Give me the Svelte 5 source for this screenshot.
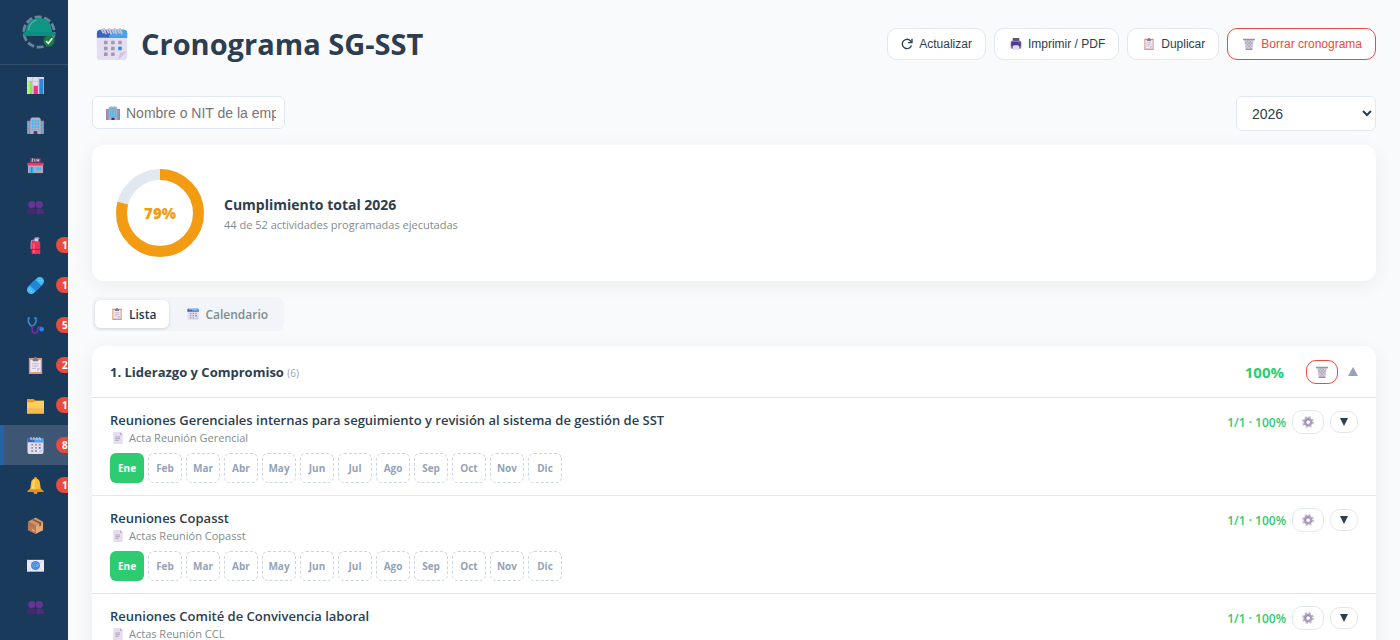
<script lang="ts">
  interface NavItem {
    icon: string;
    label: string;
    badge?: string;
  }

  interface Activity {
    name: string;
    record: string;
    done: string[];
  }

  const nav: NavItem[] = [
    { icon: 'chart', label: 'Dashboard' },
    { icon: 'building', label: 'Empresas' },
    { icon: 'store', label: 'Sedes' },
    { icon: 'people', label: 'Trabajadores' },
    { icon: 'extinguisher', label: 'Extintores', badge: '1' },
    { icon: 'bandage', label: 'Botiquines', badge: '1' },
    { icon: 'stethoscope', label: 'Exámenes', badge: '5' },
    { icon: 'clipboard', label: 'Inspecciones', badge: '2' },
    { icon: 'folder', label: 'Documentos', badge: '1' },
    { icon: 'calendar', label: 'Cronograma', badge: '8' },
    { icon: 'bell', label: 'Alertas', badge: '10' },
    { icon: 'box', label: 'Inventario' },
    { icon: 'mail', label: 'Correos' },
    { icon: 'people', label: 'Usuarios' },
  ];

  const months = ['Ene', 'Feb', 'Mar', 'Abr', 'May', 'Jun', 'Jul', 'Ago', 'Sep', 'Oct', 'Nov', 'Dic'];

  const activities: Activity[] = [
    {
      name: 'Reuniones Gerenciales internas para seguimiento y revisión al sistema de gestión de SST',
      record: 'Acta Reunión Gerencial',
      done: ['Ene'],
    },
    { name: 'Reuniones Copasst', record: 'Actas Reunión Copasst', done: ['Ene'] },
    { name: 'Reuniones Comité de Convivencia laboral', record: 'Actas Reunión CCL', done: ['Ene'] },
  ];

  let current = $state('Cronograma');
  let view = $state('lista');
  let year = $state('2026');
  let company = $state('');
  let open = $state(true);

  const percent = 79;
  const ring = 2 * Math.PI * 38.5;
</script>

{#snippet icon(name: string)}
  <svg class="icon" viewBox="0 0 18 18" fill="none" aria-hidden="true">
    {#if name === 'chart'}
      <path fill="#e4dcee" d="M0 0h18v18H0z" />
      <path stroke="#bdb3ca" stroke-width=".6" d="M0 4.500h18M0 9h18M0 13.500h18M6 0v18M12 0v18" />
      <path fill="#8ee05a" d="M1 4.500h4.500V18H1z" />
      <path fill="#b6f074" d="M1 4.500h2V18H1z" />
      <path fill="#f0357d" d="M7 9.500h4.500V18H7z" />
      <path fill="#2f86dc" d="M13 2h4.500v16H13z" />
    {:else if name === 'building'}
      <path fill="#988ba6" d="M0 4h5v14H0zM13 4h5v14h-5z" />
      <path fill="#b7adc2" d="M3.500 2 5 .5h8L14.500 2v16h-11z" />
      <path stroke="#38bdf8" stroke-width="2" stroke-dasharray="2.500 .7" d="M6 3v11M9 3v11M12 3v11" />
      <path stroke="#5db8e8" stroke-width="1.200" stroke-dasharray="2 1.500" d="M1.800 6v11M16.200 6v11" />
      <path fill="#53345f" d="M7 15h4v3H7z" />
    {:else if name === 'store'}
      <path fill="#54425f" d="M3 1h12v5H3z" />
      <path stroke="#eee7f5" stroke-width=".8" d="M5 2h1.500L5 4.500h1.500M8.200 2v3M10.500 5V2M10.500 3.500h2M12.500 2v3" />
      <path fill="#b5a7c0" d="M1 8h16v9H1z" />
      <path fill="#f0326f" d="M.5 6h17l.5 3H0z" />
      <path fill="#39bfec" d="M2.500 10.500h5V17h-5zM9.500 11h6v3h-6z" />
      <path stroke="#176d9b" stroke-width=".7" d="M5 10.500V17" />
    {:else if name === 'people'}
      <circle cx="5" cy="8" r="3.800" fill="#643394" />
      <path fill="#4a286f" d="M0 18v-2.500C0 13.500 2 12 5 12s4.500 1.500 4.500 3.500V18z" />
      <circle cx="13" cy="8" r="3.800" fill="#643394" />
      <path fill="#512b7a" d="M8.500 18v-2.500c0-2 1.800-3.500 4.700-3.500s4.800 1.500 4.800 3.500V18z" />
      <path stroke="#321c53" stroke-width=".6" d="M9.200 12v6" />
    {:else if name === 'extinguisher'}
      <path stroke="#9c91a9" stroke-width="1.500" d="M8 3 5 4 4.500 7v6M8 1h4M11 0l2 2" />
      <path fill="#ef315f" d="M5 7c0-2.500 2-3.500 4.500-3.500S14 4.500 14 7v11H5z" />
      <path fill="#fa6d8b" d="M6.500 7H8v10H6.500z" />
      <path fill="#c21744" d="M5 12.500h9v1.200H5z" />
      <path fill="#d9d1e4" d="M8 1.500h4v3H8z" />
    {:else if name === 'bandage'}
      <rect x="-2" y="4.500" width="22" height="9" rx="4.500" fill="#42b9f5" transform="rotate(-45 9 9)" />
      <path fill="#2384d8" d="m8.800 2.800 6.400 6.400-6 6L2.800 8.800z" />
      <g fill="#a3e4ff">
        <circle cx="13.500" cy="3.500" r=".6" /><circle cx="15.500" cy="4" r=".6" />
        <circle cx="2.800" cy="13" r=".6" /><circle cx="4.500" cy="15" r=".6" />
      </g>
    {:else if name === 'stethoscope'}
      <path stroke="#348bdc" stroke-width="1.700" d="M3 1H1.500v4l1.500 3 2 2 3-2 1.500-3V1H7.500" />
      <path stroke="#6a329e" stroke-width="1.700" d="M5.500 9.500V14c0 2 1 3 3 3s3-1 3-3v-1c0-1.500 1-2.500 2-2.500s2.500 1 2.500 2.500" />
      <circle cx="15.500" cy="13" r="2.400" fill="#2687ee" />
    {:else if name === 'clipboard'}
      <path fill="#d79973" d="M2 1h14v17H2z" />
      <path fill="#f0e8f7" d="M3.500 3h11v13h-11z" />
      <path fill="#83798f" d="M6 2h1.500L8 0h2l.5 2H12v2.500H6z" />
      <path stroke="#b9aec4" d="M5.500 7h7M5.500 9.500h7M5.500 12h4" />
      <path fill="#cbbad7" d="m10.500 16 4-4h-4z" />
    {:else if name === 'folder'}
      <path fill="#e8992c" d="M0 2h7l2 2h9v5H0z" />
      <path fill="#ffce5c" d="M0 5.500h7L9 4h9v13.500H0z" />
      <path fill="#f9b951" d="M0 12h18v5.500H0z" />
    {:else if name === 'calendar'}
      <rect x=".5" y="1" width="17" height="17" rx="2" fill="#e5ddf0" />
      <path fill="#3464c0" d="M.5 3c0-1.300.7-2 2-2h13c1.300 0 2 .7 2 2v2.500H.5z" />
      <path fill="#49a4ea" d="M9 1h6.500c1.300 0 2 .7 2 2v2.500H7z" />
      <path stroke="#c9c3d6" stroke-width="1" d="m4.300 3-1-1.800 1.300-.7 1 3m1.700-.5-1-1.800 1.300-.7 1 3m1.700-.5-1-1.800 1.300-.7 1 3m1.700-.5-1-1.800 1.300-.7 1 3" />
      <path fill="#a299af" d="M4.500 7.200h2v2h-2zm4 0h2v2h-2zm4 0h2v2h-2zm-8 3.300h2v2h-2zm4 0h2v2h-2zm-4 3.300h2v2h-2zm4 0h2v2h-2z" />
      <path fill="#288aeb" d="M12.500 10.500h2v2h-2z" />
      <path fill="#cfc2da" d="m12.500 18 5-5-4 1z" />
    {:else if name === 'bell'}
      <path fill="#e98d31" d="M8 0h2l1 3H7zM6.500 15h5l-1 3h-3z" />
      <path fill="#f9b939" d="M1 15.500 3.500 12l1-7C5 3 6.500 1.500 9 1.500s4 1.500 4.500 3.500l1 7 2.500 3.500z" />
      <path fill="#ffd765" d="M5 13 6 5.500C6.300 4 7 3 8.500 3L8 13z" />
      <path fill="#e88b25" d="M.5 16v-1.500L3 13h12l2.500 1.500V16z" />
    {:else if name === 'box'}
      <path fill="#cf986c" d="m1 5 8-4.500L17 5 9 9z" />
      <path fill="#b87852" d="m1 5 8 4v9l-8-4z" />
      <path fill="#dfa978" d="m17 5-8 4v9l8-4z" />
      <path fill="#885035" d="m5 3 8 4v3l2-1V6L7 2z" />
      <path stroke="#f5d6c0" d="m5 13 3 2" />
    {:else if name === 'mail'}
      <path fill="#eee7f5" d="M0 3h18v12.500H0z" />
      <path stroke="#d5cbe0" stroke-width=".8" d="m.5 3.500 8.500 7 8.500-7M.5 15 7 9m4 0 6.500 6" />
      <circle cx="9" cy="9" r="4.700" fill="#3485dc" />
      <circle cx="9" cy="9" r="1.500" stroke="#a3ccf5" stroke-width=".6" />
      <path stroke="#a3ccf5" stroke-width=".5" d="M10.700 7.500V10c1 1 1.500 0 1.500-1A3.200 3.200 0 1 0 10 12" />
    {:else if name === 'refresh'}
      <path stroke="#2c3e50" stroke-width="2" d="M15.700 11A7 7 0 1 1 14 4l2 2" />
      <path stroke="#2c3e50" stroke-width="2" d="M16.500 1v6h-6" />
    {:else if name === 'printer'}
      <path fill="#625274" d="M4 0h10v6H4z" />
      <path fill="#8a76ab" d="M1 6c0-1 1-2 2-2h12c1 0 2 1 2 2v8c0 1-1 2-2 2H3c-1 0-2-1-2-2z" />
      <path fill="#483b88" d="M2 6h14v6H2z" />
      <rect x="4.500" y="11" width="9" height="7" rx="2" fill="#e3dbee" />
      <path fill="#55b7ed" d="M13 7h2v1h-2z" />
    {:else if name === 'trash'}
      <path fill="#d3cbdc" d="M2 3h14l-2 14.500H4z" />
      <path stroke="#a096ad" stroke-width=".8" d="m3 5 10 12M6 4l8 9M10 4l5 6M15 5 5 17M12 4l-8 9M8 4 3 9" />
      <path fill="#9b8fa9" d="M0 1h18v2.200H0zM4 16h10v2H4z" />
    {:else if name === 'page'}
      <path fill="#e5dcef" d="M2 0h10l4 4v14H2z" />
      <path fill="#b3a5be" d="M12 0v4h4z" />
      <path stroke="#b3a5be" stroke-width="1.500" d="M5 7.500h7M5 10h7M5 12.500h5" />
    {:else if name === 'gear'}
      <circle cx="9" cy="9" r="7.500" stroke="#c9bdd8" stroke-width="3" stroke-dasharray="3.200 2.690" />
      <circle cx="9" cy="9" r="4.700" stroke="#ab9dbd" stroke-width="4" />
      <path stroke="#8b7da0" stroke-width="1.400" d="M6 10.500a3.500 3.500 0 0 1 4.500-4.700" />
      <circle cx="9.300" cy="9.300" r="2.200" fill="#fff" />
    {/if}
  </svg>
{/snippet}

<div class="layout">
  <aside class="sidebar">
    <div class="brand">
      <svg width="36" height="36" viewBox="0 0 36 36" fill="none" role="img" aria-label="SG-SST">
        <circle cx="18" cy="18" r="15.200" stroke="#6e8499" stroke-width="2.800" stroke-dasharray="7 2.550" />
        <path fill="#109783" d="M5 19C5 9 10 4 18 4s13 5 13 15z" />
        <rect x="2" y="18" width="32" height="4" rx="2" fill="#0c8f80" />
        <path stroke="#56b9a7" stroke-width="1.200" d="M7.500 16c.6-5 3.500-8.500 8-10" />
        <circle cx="28" cy="27" r="5.500" fill="#16803d" />
        <path stroke="#fff" stroke-width="1.700" d="m25 27 2.300 2.300 4-5" />
      </svg>
    </div>
    <nav>
      {#each nav as item}
        <a
          class="nav-item"
          class:active={current === item.label}
          href="#top"
          aria-label={item.label}
          onclick={() => (current = item.label)}
        >
          {@render icon(item.icon)}
          {#if item.badge}<span class="badge">{item.badge}</span>{/if}
        </a>
      {/each}
    </nav>
  </aside>

  <main>
    <header class="page-header">
      <h1>{@render icon('calendar')}Cronograma SG-SST</h1>
      <div class="actions">
        <button class="btn">{@render icon('refresh')}Actualizar</button>
        <button class="btn wide">{@render icon('printer')}Imprimir / PDF</button>
        <button class="btn wide">{@render icon('clipboard')}Duplicar</button>
        <button class="btn wide danger">{@render icon('trash')}Borrar cronograma</button>
      </div>
    </header>

    <div class="filters">
      <label class="company">
        {@render icon('building')}
        <input
          type="text"
          bind:value={company}
          placeholder="Nombre o NIT de la empresa"
          aria-label="Nombre o NIT de la empresa"
        />
      </label>
      <select bind:value={year} aria-label="Año">
        <option>2025</option>
        <option>2026</option>
        <option>2027</option>
      </select>
    </div>

    <section class="card summary">
      <div class="donut">
        <svg viewBox="0 0 88 88" fill="none" aria-hidden="true">
          <circle cx="44" cy="44" r="38.500" stroke="#e2e8f0" stroke-width="11" />
          <circle
            cx="44"
            cy="44"
            r="38.500"
            stroke="#f39c12"
            stroke-width="11"
            stroke-dasharray="{(ring * percent) / 100} {ring}"
            transform="rotate(-90 44 44)"
          />
        </svg>
        <strong>{percent}%</strong>
      </div>
      <div class="summary-text">
        <h2>Cumplimiento total {year}</h2>
        <p>44 de 52 actividades programadas ejecutadas</p>
      </div>
    </section>

    <div class="tabs">
      <button class="tab" class:active={view === 'lista'} onclick={() => (view = 'lista')}>
        {@render icon('clipboard')}Lista
      </button>
      <button class="tab" class:active={view === 'calendario'} onclick={() => (view = 'calendario')}>
        {@render icon('calendar')}Calendario
      </button>
    </div>

    <section class="card">
      <div class="group-header">
        <h3>1. Liderazgo y Compromiso <span>(6)</span></h3>
        <strong class="group-percent">100%</strong>
        <button class="small-btn danger" aria-label="Borrar grupo">{@render icon('trash')}</button>
        <button class="caret" aria-label="Contraer grupo" onclick={() => (open = !open)}>
          <svg width="10" height="9" viewBox="0 0 10 9"><path d="M5 0l5 9H0z" fill="currentColor" /></svg>
        </button>
      </div>
      {#if open}
        {#each activities as activity}
          <article class="activity">
            <div class="activity-main">
              <h4>{activity.name}</h4>
              <p class="record">{@render icon('page')}{activity.record}</p>
              <div class="months">
                {#each months as month}
                  <button class="month" class:done={activity.done.includes(month)}>{month}</button>
                {/each}
              </div>
            </div>
            <div class="activity-side">
              <span class="progress">1/1 · 100%</span>
              <button class="small-btn" aria-label="Configurar">{@render icon('gear')}</button>
              <button class="small-btn more" aria-label="Ver detalle">
                <svg width="8" height="8" viewBox="0 0 8 8"><path d="M0 0h8L4 8z" fill="currentColor" /></svg>
              </button>
            </div>
          </article>
        {/each}
      {/if}
    </section>
  </main>
</div>

<style>
  :global(body) {
    background: #f8fafc;
  }

  .layout {
    display: flex;
    height: 100vh;
    font-family: 'Open Sans', 'Noto Sans', sans-serif;
    color: #2c3e50;
  }

  .layout * {
    box-sizing: border-box;
  }

  h1,
  h2,
  h3,
  h4,
  p {
    margin: 0;
  }

  button,
  input,
  select {
    font-family: 'Liberation Sans', Arial, sans-serif;
    color: inherit;
  }

  button {
    cursor: pointer;
  }

  .icon {
    width: 12px;
    height: 12px;
    flex-shrink: 0;
  }

  .sidebar {
    width: 68px;
    flex-shrink: 0;
    overflow: hidden;
    background: #1a3a5c;
  }

  .brand {
    height: 65px;
    padding: 14px 0 0 21px;
    border-bottom: 1px solid #34506d;
  }

  .nav-item {
    display: flex;
    align-items: center;
    gap: 12px;
    height: 40px;
    padding-left: 23px;
    border-left: 4px solid transparent;
    text-decoration: none;
  }

  .nav-item .icon {
    width: 17px;
    height: 17px;
  }

  .nav-item.active {
    background: #3c5673;
    border-left-color: #2563a8;
  }

  .badge {
    flex-shrink: 0;
    height: 16px;
    padding: 0 6px;
    border-radius: 8px;
    background: #e74c3c;
    color: #fff;
    font-size: 10px;
    font-weight: 700;
    line-height: 16px;
  }

  main {
    flex: 1;
    min-width: 0;
    padding: 24px;
    overflow-y: auto;
    scrollbar-width: none;
  }

  .page-header {
    display: flex;
    justify-content: space-between;
    align-items: center;
    height: 40px;
    margin-bottom: 32px;
  }

  h1 {
    display: flex;
    align-items: center;
    gap: 13px;
    padding-left: 4px;
    font-size: 29px;
    font-weight: 700;
    line-height: 42px;
  }

  h1 .icon {
    width: 32px;
    height: 32px;
  }

  .actions {
    display: flex;
    gap: 8px;
  }

  .btn {
    display: flex;
    align-items: center;
    gap: 6px;
    height: 32px;
    padding: 0 13px;
    border: 1px solid #e2e8f0;
    border-radius: 10px;
    background: #fff;
    font-size: 12px;
  }

  .btn.wide {
    padding-left: 15px;
  }

  .btn.danger {
    border-color: #e74c3c;
    color: #e74c3c;
  }

  .filters {
    display: flex;
    justify-content: space-between;
    align-items: flex-start;
    margin-bottom: 14px;
  }

  .company {
    display: flex;
    align-items: center;
    gap: 6px;
    width: 193px;
    height: 33px;
    padding: 0 8px 0 13px;
    border: 1px solid #e2e8f0;
    border-radius: 6px;
    background: #fff;
  }

  .company .icon {
    width: 14px;
    height: 14px;
  }

  .company input {
    flex: 1;
    min-width: 0;
    padding: 0;
    border: none;
    outline: none;
    background: none;
    font-size: 14px;
  }

  .company input::placeholder {
    color: #757575;
  }

  select {
    width: 140px;
    height: 35px;
    padding: 0 0 0 11px;
    border: 1px solid #e2e8f0;
    border-radius: 6px;
    background: #fff;
    font-size: 14px;
  }

  .card {
    border-radius: 12px;
    background: #fff;
    box-shadow: 0 4px 20px rgba(0, 0, 0, 0.06);
  }

  .summary {
    display: flex;
    align-items: center;
    gap: 20px;
    padding: 24px;
    margin-bottom: 16px;
  }

  .donut {
    display: grid;
    place-items: center;
    width: 88px;
    height: 88px;
  }

  .donut svg,
  .donut strong {
    grid-area: 1 / 1;
  }

  .donut strong {
    color: #f39c12;
    font-size: 15px;
    font-weight: 800;
  }

  .summary-text {
    padding-top: 2px;
  }

  h2 {
    font-size: 14px;
    font-weight: 700;
    line-height: 22px;
  }

  .summary p {
    color: #7f8c8d;
    font-size: 11px;
    line-height: 18px;
  }

  .tabs {
    display: inline-flex;
    gap: 2px;
    padding: 3px;
    margin-bottom: 15px;
    border-radius: 8px;
    background: #f1f5f9;
    vertical-align: top;
  }

  .tab {
    display: flex;
    align-items: center;
    gap: 6px;
    height: 28px;
    padding: 0 13px 0 16px;
    border: none;
    border-radius: 6px;
    background: none;
    color: #7f8c8d;
    font-family: inherit;
    font-size: 12px;
    font-weight: 600;
  }

  .tab.active {
    background: #fff;
    box-shadow: 0 1px 3px rgba(0, 0, 0, 0.15);
    color: #1a3a5c;
  }

  .group-header {
    display: flex;
    align-items: center;
    height: 51px;
    padding: 0 18px;
  }

  h3 {
    flex: 1;
    font-size: 13px;
    font-weight: 700;
  }

  h3 span {
    color: #94a3b8;
    font-size: 10px;
    font-weight: 400;
  }

  .group-percent {
    margin-right: 22px;
    color: #2ecc71;
    font-size: 15px;
  }

  .small-btn {
    display: flex;
    align-items: center;
    justify-content: center;
    width: 32px;
    height: 24px;
    padding: 0;
    border: 1px solid #e2e8f0;
    border-radius: 10px;
    background: #fff;
  }

  .small-btn.danger {
    border-color: #e74c3c;
  }

  .small-btn.more {
    width: 28px;
    height: 22px;
  }

  .caret {
    display: flex;
    padding: 0;
    margin-left: 10px;
    border: none;
    background: none;
    color: #94a3b8;
  }

  .activity {
    display: flex;
    align-items: flex-start;
    justify-content: space-between;
    padding: 12px 18px;
    border-top: 1px solid #e2e8f0;
  }

  h4 {
    font-size: 13px;
    font-weight: 600;
    line-height: 20px;
  }

  .record {
    display: flex;
    align-items: center;
    gap: 5px;
    padding-left: 2px;
    margin-bottom: 7px;
    color: #7f8c8d;
    font-size: 11px;
    line-height: 16px;
  }

  .months {
    display: flex;
    gap: 4px;
  }

  .month {
    width: 34px;
    height: 30px;
    padding: 0;
    border: 1px dashed #cbd5e1;
    border-radius: 6px;
    background: #fff;
    color: #94a3b8;
    font-family: inherit;
    font-size: 10px;
    font-weight: 700;
  }

  .month.done {
    border: none;
    background: #2ecc71;
    color: #fff;
  }

  .activity-side {
    display: flex;
    align-items: center;
    gap: 6px;
  }

  .progress {
    color: #2ecc71;
    font-size: 12px;
    font-weight: 600;
  }
</style>
